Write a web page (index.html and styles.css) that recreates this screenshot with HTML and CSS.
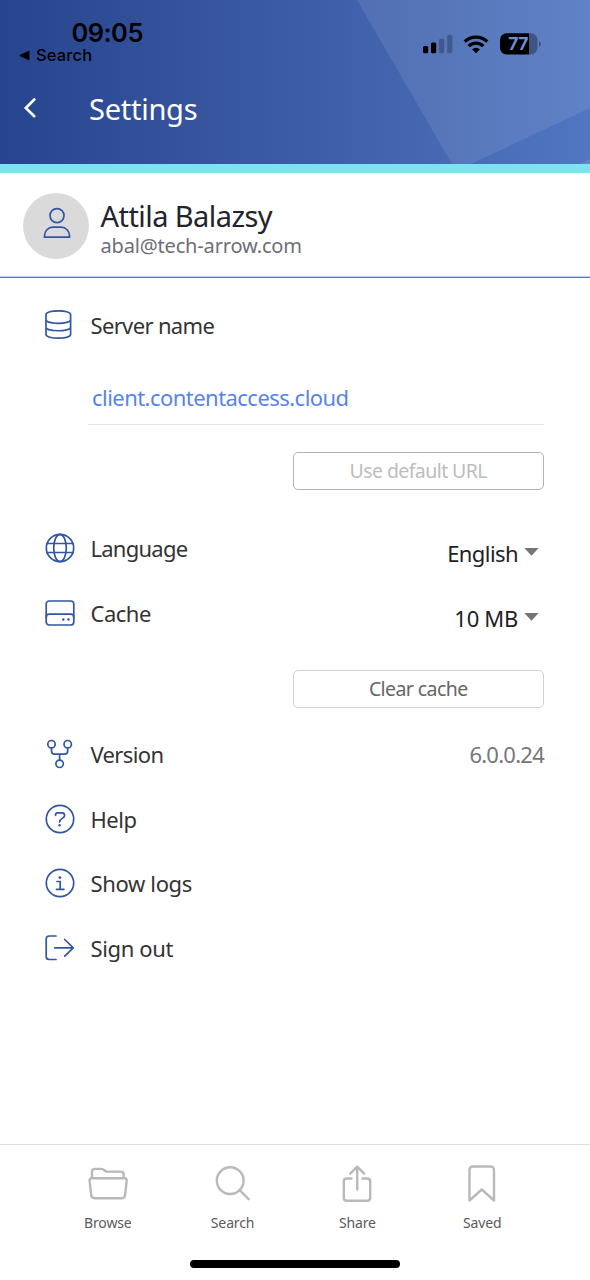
FILE: index.html
```html
<!DOCTYPE html>
<html lang="en">
<head>
<meta charset="utf-8">
<title>Settings</title>
<link rel="stylesheet" href="styles.css">
</head>
<body>
<div class="app">
  <header class="header">
    <svg class="header-art" viewBox="0 0 590 164" preserveAspectRatio="none" aria-hidden="true">
      <path d="M357 0H590V108L471 164H452Z" fill="#fff" fill-opacity=".09"/>
      <path d="M579 164L590 159V164Z" fill="#fff" fill-opacity=".1"/>
    </svg>
    <div class="status">
      <div class="status-left">
        <span class="clock">09:05</span>
        <span class="return"><svg width="11" height="11" viewBox="0 0 11 11"><path d="M.8 5.500L10 1.200V9.800Z" stroke="#000" stroke-linejoin="round"/></svg><span class="return-label">Search</span></span>
      </div>
      <svg class="status-icons" width="118" height="24" viewBox="423 32 118 24">
        <rect x="423" y="46" width="5.200" height="7.300" rx="1.500"/>
        <rect x="431" y="42.600" width="5.200" height="10.700" rx="1.500"/>
        <g opacity=".24"><rect x="439" y="38.700" width="5.200" height="14.600" rx="1.500"/><rect x="447.200" y="34.700" width="5.200" height="18.600" rx="1.500"/></g>
        <g fill="none" stroke="#000" stroke-width="3.300"><path d="M464.700 41.600A16.300 16.300 0 0 1 487.300 41.600"/><path d="M468.700 46.100A10.300 10.300 0 0 1 483.300 46.100"/></g>
        <path d="M472 49.300Q476 46.300 480 49.300L476 53.300Z"/>
        <path d="M529 33.300H531A6.500 6.500 0 0 1 537.500 39.800V48A6.500 6.500 0 0 1 531 54.500H529Z" opacity=".32"/>
        <path d="M506.500 33.300H529V54.500H506.500A6.500 6.500 0 0 1 500 48V39.800A6.500 6.500 0 0 1 506.500 33.300Z"/>
        <path d="M539 41.300Q540.900 42.300 540.900 44T539 46.700Z" opacity=".4"/>
        <text class="battery" x="518" y="50.200" text-anchor="middle">77</text>
      </svg>
    </div>
    <div class="titlebar">
      <svg class="back" width="14" height="22" viewBox="0 0 14 22"><path d="M11.300 2.500L2.800 11L11.300 19.200" fill="none" stroke="#fff" stroke-width="2.600" stroke-linecap="round"/></svg>
      <h1 class="title">Settings</h1>
    </div>
  </header>

  <section class="profile">
    <div class="avatar"><svg class="line-icon" width="28" height="32" viewBox="0 0 28 32"><circle cx="14" cy="8.600" r="7"/><path d="M1.500 30.200V29C1.500 24 5 20.200 10 20.200H18C23 20.200 26.500 24 26.500 29V30.200Z"/></svg></div>
    <div class="person"><div class="name">Attila Balazsy</div><div class="email">abal@tech-arrow.com</div></div>
  </section>

  <main class="settings">
    <div class="row">
      <svg class="line-icon" width="30" height="30" viewBox="0 0 30 30"><path d="M1 4.500C1 -.4 25.600 -.4 25.600 4.500V24.500C25.600 29.300 1 29.300 1 24.500ZM1 9.800C1 14.500 25.600 14.500 25.600 9.800M1 17.200C1 21.900 25.600 21.900 25.600 17.200"/></svg>
      <span class="label label-server">Server name</span>
    </div>
    <div class="field">client.contentaccess.cloud</div>
    <div class="button button-disabled"><span class="button-default">Use default URL</span></div>
    <div class="row row-language">
      <svg class="line-icon" width="30" height="30" viewBox="0 0 30 30"><circle cx="15" cy="15" r="13.700"/><ellipse cx="15" cy="15" rx="6.300" ry="13.700"/><path d="M2 10.500H28M2 19.500H28"/></svg>
      <span class="label label-language">Language</span>
      <span class="select"><span class="option option-language">English</span><svg width="15" height="8" viewBox="0 0 15 8"><path d="M.3 0H14.700L7.500 7.800Z" fill="#757575"/></svg></span>
    </div>
    <div class="row">
      <svg class="line-icon" width="30" height="30" viewBox="0 0 30 30"><rect x="1.200" y="3" width="27.600" height="24" rx="3"/><path d="M1.200 19.500Q1.200 16.200 4.200 16.200H25.800Q28.800 16.200 28.800 19.500"/><g class="dots"><circle cx="18.300" cy="21.500" r="1.200"/><circle cx="23.500" cy="21.500" r="1.200"/></g></svg>
      <span class="label label-cache">Cache</span>
      <span class="select"><span class="option option-cache">10 MB</span><svg width="15" height="8" viewBox="0 0 15 8"><path d="M.3 0H14.700L7.500 7.800Z" fill="#757575"/></svg></span>
    </div>
    <div class="button button-cache"><span class="button-clear">Clear cache</span></div>
    <div class="row row-version">
      <svg class="line-icon" width="30" height="30" viewBox="0 0 30 30"><circle cx="6.500" cy="5.200" r="3.700"/><circle cx="22.700" cy="5.200" r="3.700"/><circle cx="14.600" cy="24.800" r="3.700"/><path d="M6.500 9V12Q6.500 15.200 9.700 15.200H19.500Q22.700 15.200 22.700 12V9M14.600 15.200V21"/></svg>
      <span class="label label-version">Version</span>
      <span class="version">6.0.0.24</span>
    </div>
    <div class="row">
      <svg class="line-icon" width="30" height="30" viewBox="0 0 30 30"><circle cx="15" cy="15" r="13.700"/><path d="M10.600 11.300V10.500Q10.600 8.800 12.600 8.800H17Q19.600 8.800 19.600 11.400C19.600 14.700 14.600 14.100 14.600 18"/><g class="dots"><circle cx="14.600" cy="21.200" r="1.200"/></g></svg>
      <span class="label label-help">Help</span>
    </div>
    <div class="row">
      <svg class="line-icon" width="30" height="30" viewBox="0 0 30 30"><circle cx="15" cy="15" r="13.700"/><path d="M12 13.500H15.200V21M11.500 21.300H18.900"/><g class="dots"><circle cx="14.900" cy="9.600" r="1.400"/></g></svg>
      <span class="label label-logs">Show logs</span>
    </div>
    <div class="row">
      <svg class="line-icon" width="30" height="30" viewBox="0 0 30 30"><path d="M11 3H4.200Q1.200 3 1.200 6V23.500Q1.200 26.500 4.200 26.500H11M9.800 14.800H28.300M19.700 6.500L28.300 14.800L19.700 23.100"/></svg>
      <span class="label label-signout">Sign out</span>
    </div>
  </main>

  <nav class="tabs">
    <div class="tab"><svg class="tab-icon" width="42" height="42" viewBox="0 0 42 42"><path d="M5 15V8.800Q5 5.900 8 5.900H14.500C17 5.900 17.500 8.600 20 8.600H33.500Q36.700 8.600 36.700 11.600V15"/><path d="M4.800 15.200H37.600Q39.900 15.200 39.700 17.600L38.100 32.200Q37.800 35.200 35 35.200H7.500Q4.500 35.200 4.200 32.200L2.600 17.600Q2.400 15.200 4.800 15.200Z"/></svg><span class="tab-label">Browse</span></div>
    <div class="tab"><svg class="tab-icon" width="42" height="42" viewBox="0 0 42 42"><circle cx="18.200" cy="17.600" r="13.400"/><path d="M27.500 27L36.700 36.200" stroke-linecap="round"/></svg><span class="tab-label">Search</span></div>
    <div class="tab"><svg class="tab-icon" width="42" height="42" viewBox="0 0 42 42"><path d="M15.500 15.500H10.800Q7.800 15.500 7.800 18.500V34.800Q7.800 37.800 10.800 37.800H31.200Q34.200 37.800 34.200 34.800V18.500Q34.200 15.500 31.200 15.500H26.500M21.200 26.500V3.700M14.200 10.700L21.200 3.700L28.200 10.700" stroke-linecap="round"/></svg><span class="tab-label">Share</span></div>
    <div class="tab"><svg class="tab-icon" width="42" height="42" viewBox="0 0 42 42"><path d="M8.500 37.500V7Q8.500 3.500 12.300 3.500H29.200Q33 3.500 33 7V37.500L20.800 26.500Z"/></svg><span class="tab-label">Saved</span></div>
  </nav>
  <div class="home-indicator"></div>
</div>
</body>
</html>
```
FILE: styles.css
```css
* { box-sizing: border-box; }
body { margin: 0; background: #fff; font-family: "Noto Sans", "Open Sans", sans-serif; }
.app { width: 590px; height: 1280px; display: flex; flex-direction: column; overflow: hidden; background: #fff; }

.header { position: relative; flex: none; height: 173px; border-bottom: 9px solid #7be4ef; background: linear-gradient(90deg, #27458e 0%, #3c5ca5 50%, #5176c2 100%) padding-box; }
.header-art { position: absolute; inset: 0; width: 590px; height: 164px; }
.status { position: relative; height: 76px; padding: 19px 49px 0 19px; display: flex; justify-content: space-between; align-items: flex-start; font-family: Inter, sans-serif; }
.status-left { display: flex; flex-direction: column; }
.clock { margin-left: 52.500px; font-size: 25.500px; font-weight: 600; line-height: 27px; letter-spacing: -.55px; }
.return { display: flex; align-items: center; gap: 6px; height: 18px; font-size: 16.500px; font-weight: 500; }
.return-label { letter-spacing: .15px; }
.status-icons { margin-top: 13px; }
.battery { font-size: 17.500px; font-weight: 700; fill: #6d8ed0; letter-spacing: -.5px; }
.titlebar { position: relative; display: flex; align-items: center; height: 64px; padding-left: 23px; }
.title { margin: 2px 0 0 52px; color: #fff; font-size: 29px; font-weight: 400; line-height: 40px; letter-spacing: -.25px; }

.profile { flex: none; display: flex; height: 105px; padding: 19.500px 22px 0 22.500px; border-bottom: 1px solid #5b76b2; box-shadow: inset 0 -1px #c3cde4; }
.avatar { flex: none; display: flex; justify-content: center; width: 66px; height: 66px; padding: 14.500px 0 0 2px; border-radius: 50%; background: #dadada; }
.line-icon { flex: none; display: block; fill: none; stroke: #3256a3; stroke-width: 1.700; stroke-linejoin: round; stroke-linecap: round; }
.dots { fill: #3256a3; stroke: none; }
.person { margin: 4px 0 0 12px; }
.name { color: #23232d; font-size: 29px; line-height: 38px; letter-spacing: -.56px; white-space: nowrap; }
.email { color: #6e6e78; font-size: 20px; line-height: 22px; letter-spacing: -.17px; white-space: nowrap; }

.settings { flex: 1; padding: 15px 46px 0 44.500px; }
.row { display: flex; align-items: center; height: 64.600px; }
.label { margin: 0 0 0 16px; color: #333; font-size: 22px; line-height: 30px; letter-spacing: -.5px; }
.label-server { margin-top: -1px; letter-spacing: -.65px; }
.label-language { letter-spacing: -.75px; }
.label-version { letter-spacing: -.65px; }
.label-logs, .label-signout { letter-spacing: -.35px; }
.field { height: 67px; margin-left: 43.500px; padding: 24px 0 0 4px; border-bottom: 1px solid #e3e3e3; color: #5784ec; font-size: 22px; line-height: 30px; letter-spacing: -.54px; }
.button { display: flex; align-items: center; justify-content: center; width: 251.500px; height: 38px; margin: 27px 0 0 auto; border: 1px solid #d2d2d2; border-radius: 5px; color: #666; font-size: 19.500px; letter-spacing: -.58px; }
.button-disabled { border-color: #b2b2b2; color: #bdbdbd; }
.button-cache { margin-top: 24.500px; }
.row-language { margin-top: 26.500px; }
.row-version { margin-top: 14px; }
.select { display: flex; align-items: center; gap: 6px; margin: 10px 5px 0 auto; color: #222; font-size: 22px; line-height: 30px; }
.select svg { margin-top: -2px; }
.option-language { letter-spacing: -.58px; }
.option-cache { letter-spacing: -.3px; }
.version { margin-left: auto; color: #777; font-size: 22px; letter-spacing: -.75px; }

.tabs { flex: none; display: grid; grid-template-columns: repeat(4, 124.800px); justify-content: center; height: 98px; padding-top: 18px; border-top: 1px solid #e0e0e0; }
.tab { display: flex; flex-direction: column; align-items: center; }
.tab-icon { fill: none; stroke: #b9b9b9; stroke-width: 2.400; stroke-linejoin: round; }
.tab-label { margin-top: 8px; color: #5a5a5a; font-size: 14px; line-height: 20px; letter-spacing: -.12px; }
.home-indicator { flex: none; width: 210px; height: 8px; margin: 18px auto 12px; border-radius: 4px; background: #000; }
```
